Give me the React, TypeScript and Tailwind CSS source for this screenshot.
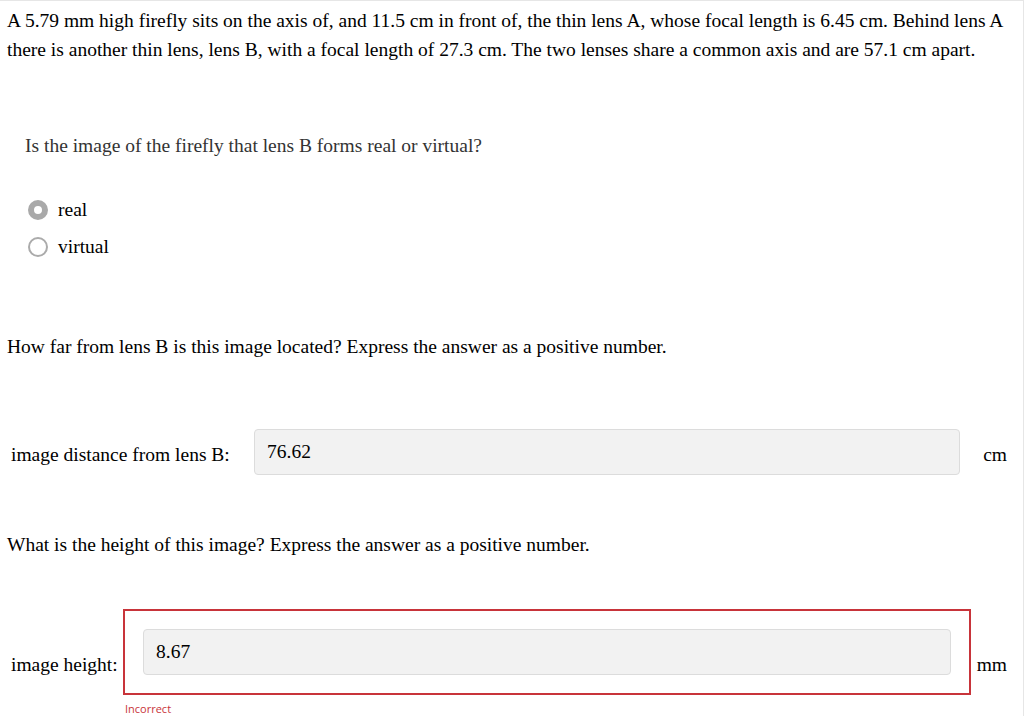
export default function App() {
  return (
    <div className="min-h-[716px] w-full bg-white font-['Liberation_Serif',serif] text-[19.5px] text-black border-t border-r border-[#e6e6e6]">
      <p className="px-[7px] pt-[5px] leading-[29px]">
        A 5.79 mm high firefly sits on the axis of, and 11.5 cm in front of, the thin lens A, whose focal length is 6.45 cm. Behind lens A there is another thin lens, lens B, with a focal length of 27.3 cm. The two lenses share a common axis and are 57.1 cm apart.
      </p>

      <p className="mt-[68px] pl-[25px] leading-[28px] text-[#333]">
        Is the image of the firefly that lens B forms real or virtual?
      </p>

      <div className="mt-[36px] flex flex-col gap-[9px] pl-[28px]">
        <label className="flex h-[28px] items-center gap-[10px]">
          <span className="h-[20px] w-[20px] rounded-full border-[6px] border-[#a9a9a9] bg-white" />
          <span>real</span>
        </label>
        <label className="flex h-[28px] items-center gap-[10px]">
          <span className="h-[20px] w-[20px] rounded-full border-2 border-[#ababab] bg-white" />
          <span>virtual</span>
        </label>
      </div>

      <p className="mt-[72px] pl-[7px] leading-[28px]">
        How far from lens B is this image located? Express the answer as a positive number.
      </p>

      <div className="mt-[68px] flex items-center pl-[11px] pr-[16px]">
        <span className="w-[243px] pt-[5px]">image distance from lens B:</span>
        <div className="flex h-[46px] flex-1 items-center rounded-[4px] border border-[#dcdcdc] bg-[#f2f2f2] px-[12px] pb-[1px]">
          76.62
        </div>
        <span className="w-[47px] pt-[5px] text-right">cm</span>
      </div>

      <p className="mt-[56px] pl-[7px] leading-[28px]">
        What is the height of this image? Express the answer as a positive number.
      </p>

      <div className="mt-[50px] flex items-center pl-[11px] pr-[16px]">
        <span className="w-[112px] pt-[26px]">image height:</span>
        <div className="flex-1">
          <div className="h-[86px] border-2 border-[#c8343a] px-[18px] pt-[18px]">
            <div className="flex h-[46px] items-center rounded-[4px] border border-[#dcdcdc] bg-[#f2f2f2] px-[12px] pb-[1px]">
              8.67
            </div>
          </div>
        </div>
        <span className="w-[36px] pt-[26px] text-right">mm</span>
      </div>
      <div className="mt-[7px] pl-[125px] font-['Open_Sans',sans-serif] text-[11px] leading-[14px] text-[#c8343a]">
        Incorrect
      </div>
    </div>
  );
}
